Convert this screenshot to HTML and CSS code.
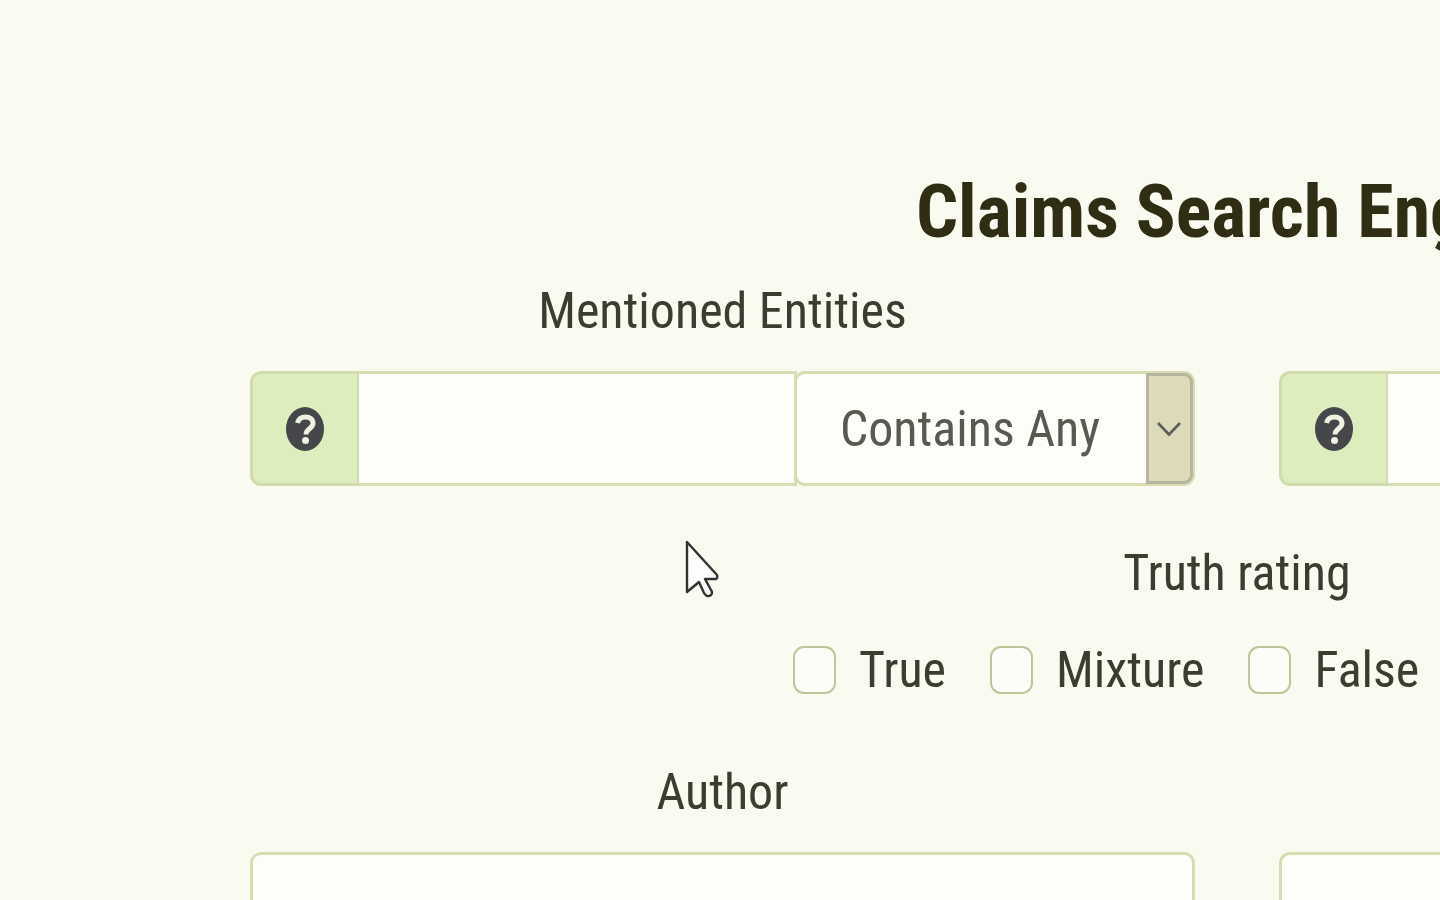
FILE: index.html
```html
<!DOCTYPE html>
<html lang="en">
<head>
<meta charset="utf-8">
<title>Claims Search Engine</title>
<link rel="stylesheet" href="styles.css">
</head>
<body>
<main class="page">
  <h1 class="title">Claims Search Engine</h1>
  <form class="form">
    <div class="columns">
      <div class="field">
        <label class="label" for="entities">Mentioned Entities</label>
        <div class="group">
          <button class="help" type="button" aria-label="Help on entities">
            <svg class="help-icon" viewBox="0 0 38 44" aria-hidden="true"><ellipse cx="19" cy="22" rx="19" ry="22" fill="#45474a"/><path d="M11.500 16C12.500 12 15.500 10 19.500 10C24 10 27 12.500 27 16.500C27 21.500 20 21.500 20 27.500" fill="none" stroke="#eef2e2" stroke-width="5"/><ellipse cx="19.500" cy="33.500" rx="3.500" ry="3.500" fill="#eef2e2"/></svg>
          </button>
          <input class="text" id="entities" type="text">
          <div class="picker">
            <select class="select" aria-label="Entity match mode"><option>Contains Any</option></select>
            <span class="arrow"><svg class="chevron" viewBox="0 0 24 16" aria-hidden="true"><path d="M1 2L12 13.500L23 2" fill="none" stroke="#5c5e58" stroke-width="2.600"/></svg></span>
          </div>
        </div>
      </div>
      <div class="field">
        <div class="group">
          <button class="help" type="button" aria-label="Help on keywords">
            <svg class="help-icon" viewBox="0 0 38 44" aria-hidden="true"><ellipse cx="19" cy="22" rx="19" ry="22" fill="#45474a"/><path d="M11.500 16C12.500 12 15.500 10 19.500 10C24 10 27 12.500 27 16.500C27 21.500 20 21.500 20 27.500" fill="none" stroke="#eef2e2" stroke-width="5"/><ellipse cx="19.500" cy="33.500" rx="3.500" ry="3.500" fill="#eef2e2"/></svg>
          </button>
          <input class="text text-last" type="text" aria-label="Keywords">
        </div>
      </div>
    </div>
    <fieldset class="ratings">
      <legend class="label">Truth rating</legend>
      <div class="checks">
        <label class="check"><input class="box" type="checkbox">True</label>
        <label class="check"><input class="box" type="checkbox">Mixture</label>
        <label class="check"><input class="box" type="checkbox">False</label>
      </div>
    </fieldset>
    <div class="columns">
      <div class="field">
        <label class="label" for="author">Author</label>
        <input class="text text-full" id="author" type="text">
      </div>
      <div class="field">
        <input class="text text-full" type="text" aria-label="Second filter">
      </div>
    </div>
  </form>
</main>
<svg class="cursor" viewBox="0 0 34 60" aria-hidden="true"><path d="M2 2V52L14 42L19 53Q22 58 26 55Q28 53 26 50L20 39H31Q33 38 32 35Z" fill="#fcfdfc" stroke="#303330" stroke-width="2.400" stroke-linejoin="round"/></svg>
</body>
</html>
```
FILE: styles.css
```css
* { box-sizing: border-box; }

body {
  margin: 0;
  min-height: 100vh;
  overflow: hidden;
  background: #fafbf0;
  color: #3c3d30;
  font-family: "Roboto Condensed", Roboto, sans-serif;
  font-size: 50px;
  line-height: 60px;
}

.page {
  width: 172vw;
  height: 100vh;
  overflow: hidden;
  padding: 170px 253px 0 250px;
}

.title {
  margin: 0 0 27px;
  color: #2f2e14;
  font-size: 74px;
  font-weight: 700;
  line-height: 84px;
  text-align: center;
}

.columns {
  display: grid;
  grid-template-columns: repeat(2, minmax(0, 1fr));
  align-items: end;
  gap: 84px;
}

.field {
  display: flex;
  flex-direction: column;
  gap: 30px;
  min-width: 0;
}

.label {
  display: block;
  padding: 0;
  text-align: center;
}

.group { display: flex; }

.help {
  display: flex;
  flex: none;
  align-items: center;
  justify-content: center;
  width: 109px;
  padding: 0;
  border: 3px solid #d2dbae;
  border-right-width: 2px;
  border-radius: 11px 0 0 11px;
  background: #deedbe;
}

.help-icon { width: 38px; height: 44px; }

.text {
  flex: 1;
  min-width: 0;
  height: 115px;
  padding: 0 44px;
  border: 3px solid #d9dcb0;
  border-left-width: 0;
  background: #fdfdf9;
  color: inherit;
  font: inherit;
}

.text-last { border-radius: 0 11px 11px 0; }

.text-full {
  flex: none;
  width: 100%;
  border-left-width: 3px;
  border-radius: 11px;
}

.picker {
  position: relative;
  flex: none;
  width: 401px;
  margin-left: -3px;
}

.select {
  display: block;
  appearance: none;
  width: 100%;
  height: 115px;
  padding: 0 50px 0 43px;
  border: 3px solid #d9dcb0;
  border-radius: 11px;
  background: #fdfdf9;
  background-clip: padding-box;
  color: #585a50;
  font: inherit;
}

.arrow {
  position: absolute;
  top: 2px;
  right: 2px;
  bottom: 2px;
  display: flex;
  align-items: center;
  justify-content: center;
  width: 47px;
  border: 3px solid #b5b5a0;
  border-radius: 0 9px 9px 0;
  background: #dcdab8;
  pointer-events: none;
}

.chevron { width: 24px; height: 16px; }

.ratings {
  margin: 57px 0 62px;
  padding: 0;
  border: 0;
}

.ratings .label { width: 100%; }

.checks {
  display: flex;
  gap: 44px;
  margin-top: 37px;
  padding-left: 543px;
}

.check {
  display: flex;
  align-items: center;
  gap: 23px;
}

.box {
  appearance: none;
  width: 43px;
  height: 48px;
  margin: 0;
  border: 2px solid #bfc598;
  border-radius: 11px;
  background: #fcfdf8;
}

.cursor {
  position: absolute;
  top: 540px;
  left: 685px;
  width: 34px;
  height: 60px;
}
```
